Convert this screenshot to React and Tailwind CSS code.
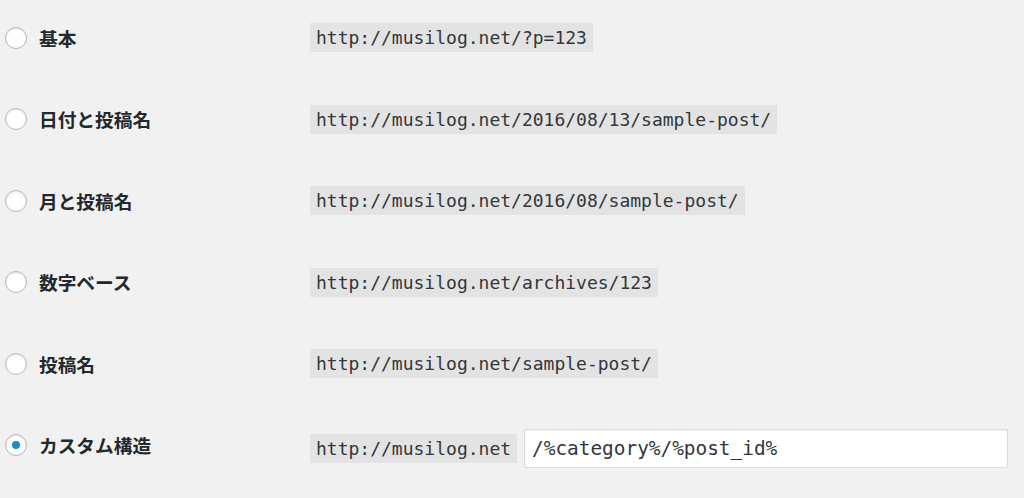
import React from "react";

const rows = [
  { label: "基本", url: "http://musilog.net/?p=123" },
  { label: "日付と投稿名", url: "http://musilog.net/2016/08/13/sample-post/" },
  { label: "月と投稿名", url: "http://musilog.net/2016/08/sample-post/" },
  { label: "数字ベース", url: "http://musilog.net/archives/123" },
  { label: "投稿名", url: "http://musilog.net/sample-post/" },
];

const mono = { fontFamily: '"DejaVu Sans Mono", "Liberation Mono", monospace' };

function Radio({ checked }) {
  return (
    <span className="flex items-center justify-center w-[22px] h-[22px] rounded-full border border-[#b4b9be] bg-white shadow-[inset_0_1px_2px_rgba(0,0,0,0.1)] shrink-0">
      {checked && <span className="block w-[8px] h-[8px] rounded-full bg-[#1e8cbe]" />}
    </span>
  );
}

function Label({ text, checked }) {
  return (
    <div className="flex items-center w-[310px] pl-[5px] gap-[12px] shrink-0">
      <Radio checked={checked} />
      <span
        className="text-[18.7px] font-bold text-[#23282d] leading-[22px]"
        style={{ fontFamily: '"Noto Sans CJK JP", "Noto Sans", sans-serif' }}
      >
        {text}
      </span>
    </div>
  );
}

function Code({ children }) {
  return (
    <code
      className="block bg-[#e3e3e3] text-[#32373c] text-[18px] leading-[29px] h-[29px] px-[6px] whitespace-nowrap"
      style={mono}
    >
      {children}
    </code>
  );
}

export default function App() {
  return (
    <div className="w-[1024px] h-[498px] bg-[#f1f1f1] overflow-hidden pt-[23px] flex flex-col">
      <div className="flex flex-col gap-[52.5px]">
        {rows.map((r) => (
          <div key={r.label} className="flex items-center h-[29px]">
            <Label text={r.label} />
            <Code>{r.url}</Code>
          </div>
        ))}
      </div>
      <div className="flex items-start h-[39px] mt-[50.5px]">
        <div className="mt-[5px]">
          <Label text="カスタム構造" checked />
        </div>
        <div className="flex items-center h-[39px] gap-[7px]">
          <Code>http://musilog.net</Code>
          <input
            readOnly
            value="/%category%/%post_id%"
            className="w-[484px] h-[39px] bg-white border border-[#dddddd] shadow-[inset_0_1px_2px_rgba(0,0,0,0.07)] px-[7px] text-[19.4px] text-[#32373c] outline-none"
            style={mono}
          />
        </div>
      </div>
    </div>
  );
}
